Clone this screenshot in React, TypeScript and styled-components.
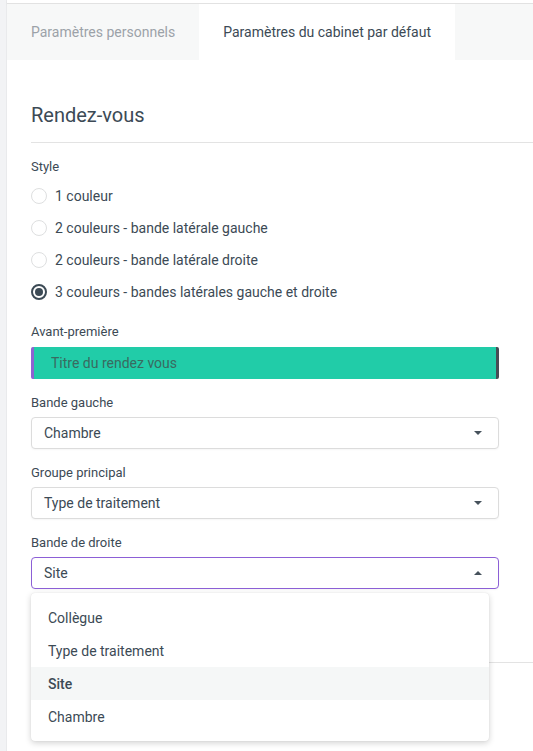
import React from "react";
import styled, { createGlobalStyle } from "styled-components";

const GlobalStyle = createGlobalStyle`
  html, body {
    margin: 0;
    padding: 0;
    background: #ffffff;
    font-family: Roboto, "Liberation Sans", Arial, sans-serif;
    color: #3c4a55;
    -webkit-font-smoothing: antialiased;
  }
  * { box-sizing: border-box; }
`;

const Page = styled.div`
  display: flex;
  min-height: 751px;
  overflow: hidden;
`;

const SideStrip = styled.div`
  width: 7px;
  flex-shrink: 0;
  background: #f2f3f5;
  border-right: 1px solid #e9eaec;
`;

const Main = styled.div`
  flex: 1;
  display: flex;
  flex-direction: column;
  min-width: 0;
`;

const TopEdge = styled.div`
  height: 4px;
  border-bottom: 1px solid #e2e2e2;
  box-shadow: 0 1px 2px rgba(0, 0, 0, 0.06);
`;

const TabBar = styled.div`
  display: flex;
  height: 56px;
  background: #f7f8f8;
`;

const Tab = styled.div<{ $active?: boolean }>`
  display: flex;
  align-items: center;
  padding: 0 24px;
  font-size: 14px;
  background: ${(p) => (p.$active ? "#ffffff" : "transparent")};
  color: ${(p) => (p.$active ? "#3c4a55" : "#9ca2a8")};
`;

const Content = styled.div`
  padding-left: 24px;
`;

const Heading = styled.h2`
  margin: 41px 0 0;
  padding-bottom: 13px;
  font-size: 20px;
  line-height: 28px;
  font-weight: 400;
  color: #3c4a55;
  border-bottom: 1px solid #e3e3e3;
`;

const Form = styled.div`
  width: 468px;
  display: flex;
  flex-direction: column;
  gap: 15px;
  padding-top: 15px;
`;

const Field = styled.div<{ $gap?: number }>`
  display: flex;
  flex-direction: column;
  gap: ${(p) => p.$gap ?? 5}px;
  position: relative;
`;

const Label = styled.div`
  font-size: 13px;
  line-height: 18px;
  color: #3c4a55;
`;

const RadioList = styled.div`
  display: flex;
  flex-direction: column;
`;

const RadioRow = styled.label`
  display: flex;
  align-items: center;
  gap: 8px;
  height: 32px;
  font-size: 14px;
  color: #3c4a55;
`;

const RadioCircle = styled.span<{ $checked?: boolean }>`
  width: 16px;
  height: 16px;
  border-radius: 50%;
  flex-shrink: 0;
  display: flex;
  align-items: center;
  justify-content: center;
  border: ${(p) => (p.$checked ? "2px solid #3c4a55" : "1.5px solid #dedfe0")};
  background: #fff;
  &::after {
    content: "";
    display: ${(p) => (p.$checked ? "block" : "none")};
    width: 8px;
    height: 8px;
    border-radius: 50%;
    background: #3c4a55;
  }
`;

const Preview = styled.div`
  height: 32px;
  display: flex;
  align-items: center;
  padding-left: 17px;
  background: #21cca8;
  border-left: 3px solid #8e63d2;
  border-right: 3px solid #474c55;
  border-radius: 2px;
  font-size: 14px;
  color: #3a6a60;
`;

const SelectBox = styled.div<{ $open?: boolean }>`
  height: 32px;
  display: flex;
  align-items: center;
  justify-content: space-between;
  padding: 0 16px 0 12px;
  border: 1px solid ${(p) => (p.$open ? "#8c5fd6" : "#dcdcdc")};
  border-radius: 4px;
  background: #fff;
  box-shadow: 0 1px 2px rgba(0, 0, 0, 0.04);
  font-size: 14px;
  color: #3c4a55;
`;

const Caret = styled.span<{ $up?: boolean }>`
  width: 0;
  height: 0;
  border-left: 4.5px solid transparent;
  border-right: 4.5px solid transparent;
  ${(p) =>
    p.$up ? "border-bottom: 4.5px solid #46525c;" : "border-top: 4.5px solid #46525c;"}
`;

const Menu = styled.div`
  position: absolute;
  top: calc(100% + 4px);
  left: 0;
  width: 458px;
  padding: 8px 0;
  background: #fff;
  border-radius: 4px;
  box-shadow: 0 2px 6px rgba(0, 0, 0, 0.18), 0 0 1px rgba(0, 0, 0, 0.12);
  z-index: 10;
`;

const MenuItem = styled.div<{ $selected?: boolean }>`
  height: 33px;
  display: flex;
  align-items: center;
  padding-left: 17px;
  font-size: 14px;
  font-weight: ${(p) => (p.$selected ? 500 : 400)};
  color: #3c4a55;
  background: ${(p) => (p.$selected ? "#f5f7f7" : "transparent")};
`;

const SectionEnd = styled.div`
  margin-top: 73px;
  border-top: 1px solid #e3e3e3;
`;

const styles = [
  "1 couleur",
  "2 couleurs - bande latérale gauche",
  "2 couleurs - bande latérale droite",
  "3 couleurs - bandes latérales gauche et droite",
];

const options = ["Collègue", "Type de traitement", "Site", "Chambre"];

const Select = ({
  value,
  open,
  children,
}: {
  value: string;
  open?: boolean;
  children?: React.ReactNode;
}) => (
  <>
    <SelectBox $open={open}>
      <span>{value}</span>
      <Caret $up={open} />
    </SelectBox>
    {children}
  </>
);

export default function App() {
  return (
    <>
      <GlobalStyle />
      <Page>
        <SideStrip />
        <Main>
          <TopEdge />
          <TabBar>
            <Tab>Paramètres personnels</Tab>
            <Tab $active>Paramètres du cabinet par défaut</Tab>
          </TabBar>
          <Content>
            <Heading>Rendez-vous</Heading>
            <Form>
              <Field $gap={4}>
                <Label>Style</Label>
                <RadioList>
                  {styles.map((s, i) => (
                    <RadioRow key={s}>
                      <RadioCircle $checked={i === 3} />
                      {s}
                    </RadioRow>
                  ))}
                </RadioList>
              </Field>
              <Field $gap={6}>
                <Label>Avant-première</Label>
                <Preview>Titre du rendez vous</Preview>
              </Field>
              <Field>
                <Label>Bande gauche</Label>
                <Select value="Chambre" />
              </Field>
              <Field>
                <Label>Groupe principal</Label>
                <Select value="Type de traitement" />
              </Field>
              <Field>
                <Label>Bande de droite</Label>
                <Select value="Site" open>
                  <Menu>
                    {options.map((o) => (
                      <MenuItem key={o} $selected={o === "Site"}>
                        {o}
                      </MenuItem>
                    ))}
                  </Menu>
                </Select>
              </Field>
            </Form>
            <SectionEnd />
          </Content>
        </Main>
      </Page>
    </>
  );
}
